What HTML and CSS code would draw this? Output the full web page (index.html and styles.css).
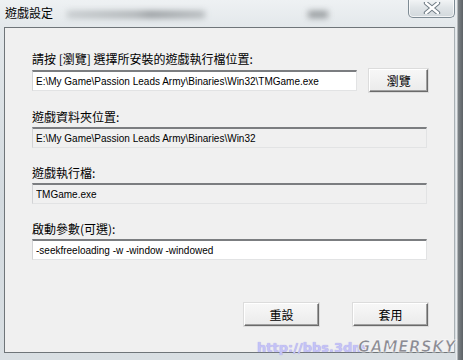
FILE: index.html
```html
<!DOCTYPE html>
<html lang="zh-Hant">
<head>
    <meta charset="UTF-8">
    <meta name="viewport" content="width=device-width, initial-scale=1.0">
    <title>遊戲設定</title>
    <link rel="stylesheet" href="styles.css">
</head>
<body>
    <div class="window">
        <div class="titlebar">
            <span class="title">遊戲設定</span>
            <span class="blur blur-long"></span>
            <span class="blur blur-short"></span>
            <button class="close-btn" aria-label="關閉">
                <svg width="20" height="12" viewBox="0 0 20 12">
                    <path d="M4 1 L16 11 M16 1 L4 11" stroke="#6f7b84" stroke-width="4.4" stroke-linecap="round"/>
                    <path d="M4 1 L16 11 M16 1 L4 11" stroke="#ffffff" stroke-width="2.4" stroke-linecap="round"/>
                </svg>
            </button>
        </div>

        <div class="client">
            <div class="field">
                <label for="exePath">請按 [瀏覽] 選擇所安裝的遊戲執行檔位置:</label>
                <div class="field-row">
                    <input type="text" id="exePath" class="textbox short" value="E:\My Game\Passion Leads Army\Binaries\Win32\TMGame.exe">
                    <button class="win-btn browse">瀏覽</button>
                </div>
            </div>

            <div class="field">
                <label for="folder">遊戲資料夾位置:</label>
                <input type="text" id="folder" class="textbox readonly" value="E:\My Game\Passion Leads Army\Binaries\Win32" readonly>
            </div>

            <div class="field">
                <label for="exeName">遊戲執行檔:</label>
                <input type="text" id="exeName" class="textbox readonly" value="TMGame.exe" readonly>
            </div>

            <div class="field">
                <label for="args">啟動參數(可選):</label>
                <input type="text" id="args" class="textbox" value="-seekfreeloading -w -window -windowed">
            </div>

            <div class="footer">
                <button class="win-btn">重設</button>
                <button class="win-btn">套用</button>
            </div>
        </div>

        <div class="watermark">
            <span class="wm-url">http://bbs.3dm</span><span class="wm-logo">GAMERSKY</span>
        </div>
    </div>
</body>
</html>
```

FILE: styles.css
```css
* {
    margin: 0;
    padding: 0;
    box-sizing: border-box;
}

body {
    width: 463px;
    height: 360px;
    overflow: hidden;
    font-family: "Liberation Sans", "Noto Sans CJK TC", sans-serif;
}

.window {
    position: relative;
    width: 463px;
    height: 360px;
    display: flex;
    flex-direction: column;
    background:
        linear-gradient(to right, transparent 456px, #e9ecee 456px, #e9ecee 457px, #7d8387 458px, #5d6266 463px),
        linear-gradient(#eef1f3, #e2e7ea 30px, #d3dadf 200px, #d9dfe3);
}

.titlebar {
    height: 27px;
    display: flex;
    align-items: center;
    padding-left: 5px;
    padding-bottom: 1px;
}

.title {
    font-family: "Noto Sans CJK TC", sans-serif;
    font-size: 12px;
    line-height: 14px;
    color: #000;
}

/* blurred window text seen through the glass */
.blur {
    height: 7px;
    margin-top: 2px;
    background: #8e9396;
    filter: blur(3px);
    opacity: 0.7;
}

.blur-long {
    width: 138px;
    margin-left: 14px;
    background: linear-gradient(to right, #b3b8bb, #8d9295 50%, #6c7175 60%, #9ba0a3);
}

.blur-short {
    width: 20px;
    margin-left: 103px;
    background: #6f7477;
}

.close-btn {
    margin-left: auto;
    margin-right: 8px;
    align-self: flex-start;
    margin-top: -1px;
    width: 47px;
    height: 19px;
    border: 1px solid #7e8b94;
    border-top: none;
    border-radius: 0 0 5px 5px;
    background: linear-gradient(#f4f6f7, #dfe4e7 50%, #d2d8dc);
    box-shadow: inset 0 0 0 1px rgba(255, 255, 255, 0.7);
    display: flex;
    align-items: center;
    justify-content: center;
}

.client {
    margin-left: 4px;
    width: 451px;
    height: 326px;
    background: #f0f0f0;
    border: 1px solid #6f7579;
    border-right-color: #a9b0b4;
    padding: 24px 26px 0 27px;
}

.field {
    margin-bottom: 18px;
}

.field label {
    display: block;
    font-family: "Noto Sans CJK TC", sans-serif;
    font-size: 12px;
    line-height: 14px;
    color: #000;
    margin-bottom: 3px;
}

.field-row {
    display: flex;
    align-items: center;
    gap: 12px;
}

.textbox {
    display: block;
    width: 395px;
    height: 21px;
    padding: 0 3px;
    font-family: "Liberation Sans", sans-serif;
    font-size: 10px;
    color: #000;
    background: #fff;
    border: 1px solid #e2e3e4;
    border-top: 2px solid #7b7d80;
    border-left-color: #d2d3d5;
    outline: none;
}

.textbox.short {
    width: 328px;
}

.textbox.readonly {
    background: #f0f0f0;
}

.win-btn {
    width: 75px;
    height: 23px;
    font-family: "Noto Sans CJK TC", sans-serif;
    font-size: 12px;
    color: #000;
    background: linear-gradient(#f7f7f7, #ebebeb);
    border: 1px solid;
    border-color: #ffffff #6a6a6a #6a6a6a #ffffff;
    box-shadow: inset -1px -1px 0 #a0a0a0, 0 0 0 1px #dcdcdc;
}

.win-btn.browse {
    width: 59px;
}

.footer {
    display: flex;
    justify-content: flex-end;
    gap: 34px;
    margin-top: 43px;
}

.watermark {
    position: absolute;
    left: 257px;
    top: 338px;
    display: flex;
    align-items: baseline;
    white-space: nowrap;
}

.wm-url {
    font-family: "DejaVu Sans", sans-serif;
    font-weight: bold;
    font-size: 13px;
    color: #c5c2f6;
    text-shadow: 0 0 1px #9d99e0;
}

.wm-logo {
    font-family: "DejaVu Sans", sans-serif;
    font-weight: bold;
    font-style: italic;
    font-size: 15px;
    letter-spacing: 0.5px;
    color: #8b8b93;
    -webkit-text-stroke: 0.6px #ffffff;
    margin-left: -8px;
}
```
